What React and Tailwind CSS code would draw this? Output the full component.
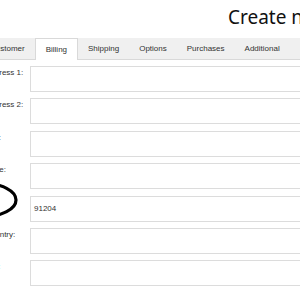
import React from "react";

const tabs = ["Customer", "Billing", "Shipping", "Options", "Purchases", "Additional"];
const rows = [
  { label: "Address 1:", value: "" },
  { label: "Address 2:", value: "" },
  { label: "City:", value: "" },
  { label: "State:", value: "" },
  { label: "Zip:", value: "91204" },
  { label: "Country:", value: "" },
  { label: "Fax:", value: "" },
];

export default function App() {
  return (
    <div
      className="relative w-[300px] h-[300px] overflow-hidden bg-white text-[#333]"
      style={{ fontFamily: '"Liberation Sans", Arial, sans-serif' }}
    >
      <div
        className="h-[38px] pl-[228px] pt-[5px] whitespace-nowrap text-[19px] leading-[24px] text-[#111]"
        style={{ fontFamily: '"Noto Sans", sans-serif' }}
      >
        Create new customer
      </div>
      <div className="flex h-[22px] bg-[#f0f0f0] border-b border-[#d9d9d9] ml-[-20px] text-[8px] whitespace-nowrap">
        {tabs.map((t) => (
          <div
            key={t}
            className={
              t === "Billing"
                ? "flex items-center px-[10px] bg-white border-x border-t border-[#d9d9d9] mb-[-1px]"
                : "flex items-center px-[10px]"
            }
          >
            {t}
          </div>
        ))}
      </div>
      <div className="flex flex-col gap-[6.4px] pt-[6px]">
        {rows.map((r) => (
          <div key={r.label} className="flex items-start ml-[-15px]">
            <div className="w-[45px] shrink-0 pt-[1px] text-[8px] leading-[12px] whitespace-nowrap">
              {r.label}
            </div>
            <div className="h-[26px] w-[300px] shrink-0 border border-[#dcdcdc] flex items-center pl-[3px] text-[8px]">
              {r.value}
            </div>
          </div>
        ))}
      </div>
      <svg
        className="absolute left-[-50px] top-[180px]"
        width="70"
        height="40"
        viewBox="0 0 70 40"
      >
        <ellipse cx="34" cy="20" rx="32" ry="16.5" fill="none" stroke="#000" strokeWidth="3.2" />
      </svg>
    </div>
  );
}
